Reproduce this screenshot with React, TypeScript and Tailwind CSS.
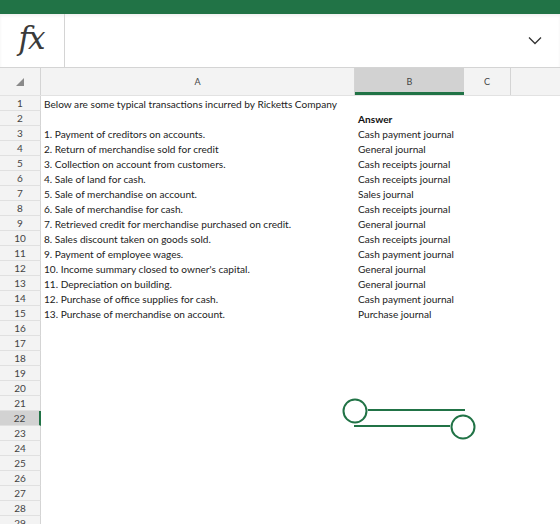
import React from "react";

const rowsA: string[] = [
  "Below are some typical transactions incurred by Ricketts Company",
  "",
  "1. Payment of creditors on accounts.",
  "2. Return of merchandise sold for credit",
  "3. Collection on account from customers.",
  "4. Sale of land for cash.",
  "5. Sale of merchandise on account.",
  "6. Sale of merchandise for cash.",
  "7. Retrieved credit for merchandise purchased on credit.",
  "8. Sales discount taken on goods sold.",
  "9. Payment of employee wages.",
  "10. Income summary closed to owner's capital.",
  "11. Depreciation on building.",
  "12. Purchase of office supplies for cash.",
  "13. Purchase of merchandise on account.",
];
const rowsB: string[] = [
  "",
  "Answer",
  "Cash payment journal",
  "General journal",
  "Cash receipts journal",
  "Cash receipts journal",
  "Sales journal",
  "Cash receipts journal",
  "General journal",
  "Cash receipts journal",
  "Cash payment journal",
  "General journal",
  "General journal",
  "Cash payment journal",
  "Purchase journal",
];

export default function App() {
  const rows = Array.from({ length: 29 }, (_, i) => i + 1);
  return (
    <div
      className="relative w-[560px] h-[524px] overflow-hidden bg-white font-['Lato','Open_Sans',sans-serif]"
    >
      <div className="h-[14px] bg-[#217346]" />
      <div className="flex h-[54px] border-b border-[#d4d4d4] bg-white shadow-[inset_0_2px_3px_rgba(0,0,0,0.06)]">
        <div className="w-[65px] border-r border-[#d4d4d4] flex items-center justify-center">
          <span className="font-['DejaVu_Serif',serif] italic text-[31px] text-[#3a3a3a] leading-none pb-[4px] pr-[2px] tracking-[-2px]">
            fx
          </span>
        </div>
        <div className="flex-1" />
        <div className="w-[50px] flex items-center justify-center">
          <svg width="14" height="9" viewBox="0 0 14 9">
            <path d="M1 1.5 L7 7.5 L13 1.5" fill="none" stroke="#333" strokeWidth="1.3" />
          </svg>
        </div>
      </div>
      <div className="flex h-[28px] bg-[#f3f3f3] text-[9px] text-[#444] border-b border-[#e2e2e2]">
        <div className="w-[41px] border-r border-[#d4d4d4] flex items-end justify-center pb-[9px]">
          <svg width="8" height="8" viewBox="0 0 8 8">
            <path d="M8 0 L8 8 L0 8 Z" fill="#8a8a8a" />
          </svg>
        </div>
        <div className="w-[314px] border-r border-[#d4d4d4] flex items-center justify-center">A</div>
        <div className="w-[109px] bg-[#d2d2d2] border-b-[3px] border-[#217346] flex items-center justify-center pt-[3px]">B</div>
        <div className="w-[47px] border-r border-[#d4d4d4] flex items-center justify-center">C</div>
        <div className="flex-1" />
      </div>
      <div className="flex flex-col">
        {rows.map((n) => {
          const a = rowsA[n - 1] ?? "";
          const b = rowsB[n - 1] ?? "";
          const sel = n === 22;
          return (
            <div key={n} className="flex h-[15px] leading-[15px]">
              <div
                className={
                  sel
                    ? "w-[41px] shrink-0 bg-[#d2d2d2] border-r-[2px] border-r-[#217346] border-b border-b-[#e0e0e0] text-center text-[10px] text-[#444]"
                    : "w-[41px] shrink-0 bg-[#f3f3f3] border-r border-r-[#d4d4d4] border-b border-b-[#e0e0e0] text-center text-[10px] text-[#444]"
                }
              >
                {n}
              </div>
              <div className="w-[314px] shrink-0 pl-[3px] pt-[1px] text-[10.1px] text-[#222] whitespace-nowrap overflow-visible">
                {a}
              </div>
              <div
                className={
                  n === 2
                    ? "w-[109px] shrink-0 pl-[3px] pt-[1px] text-[10.1px] font-bold text-[#111] whitespace-nowrap"
                    : "w-[109px] shrink-0 pl-[3px] pt-[1px] text-[10.1px] text-[#222] whitespace-nowrap"
                }
              >
                {b}
              </div>
              <div className="flex-1" />
            </div>
          );
        })}
      </div>
      <svg
        className="absolute left-[330px] top-[390px]"
        width="160"
        height="60"
        viewBox="0 0 160 60"
      >
        <line x1="38" y1="20" x2="135" y2="20" stroke="#217346" strokeWidth="2" />
        <line x1="24" y1="36" x2="120" y2="36" stroke="#217346" strokeWidth="2" />
        <circle cx="25" cy="21" r="11.5" fill="white" stroke="#217346" strokeWidth="2" />
        <circle cx="133" cy="37" r="11.5" fill="white" stroke="#217346" strokeWidth="2" />
      </svg>
    </div>
  );
}
